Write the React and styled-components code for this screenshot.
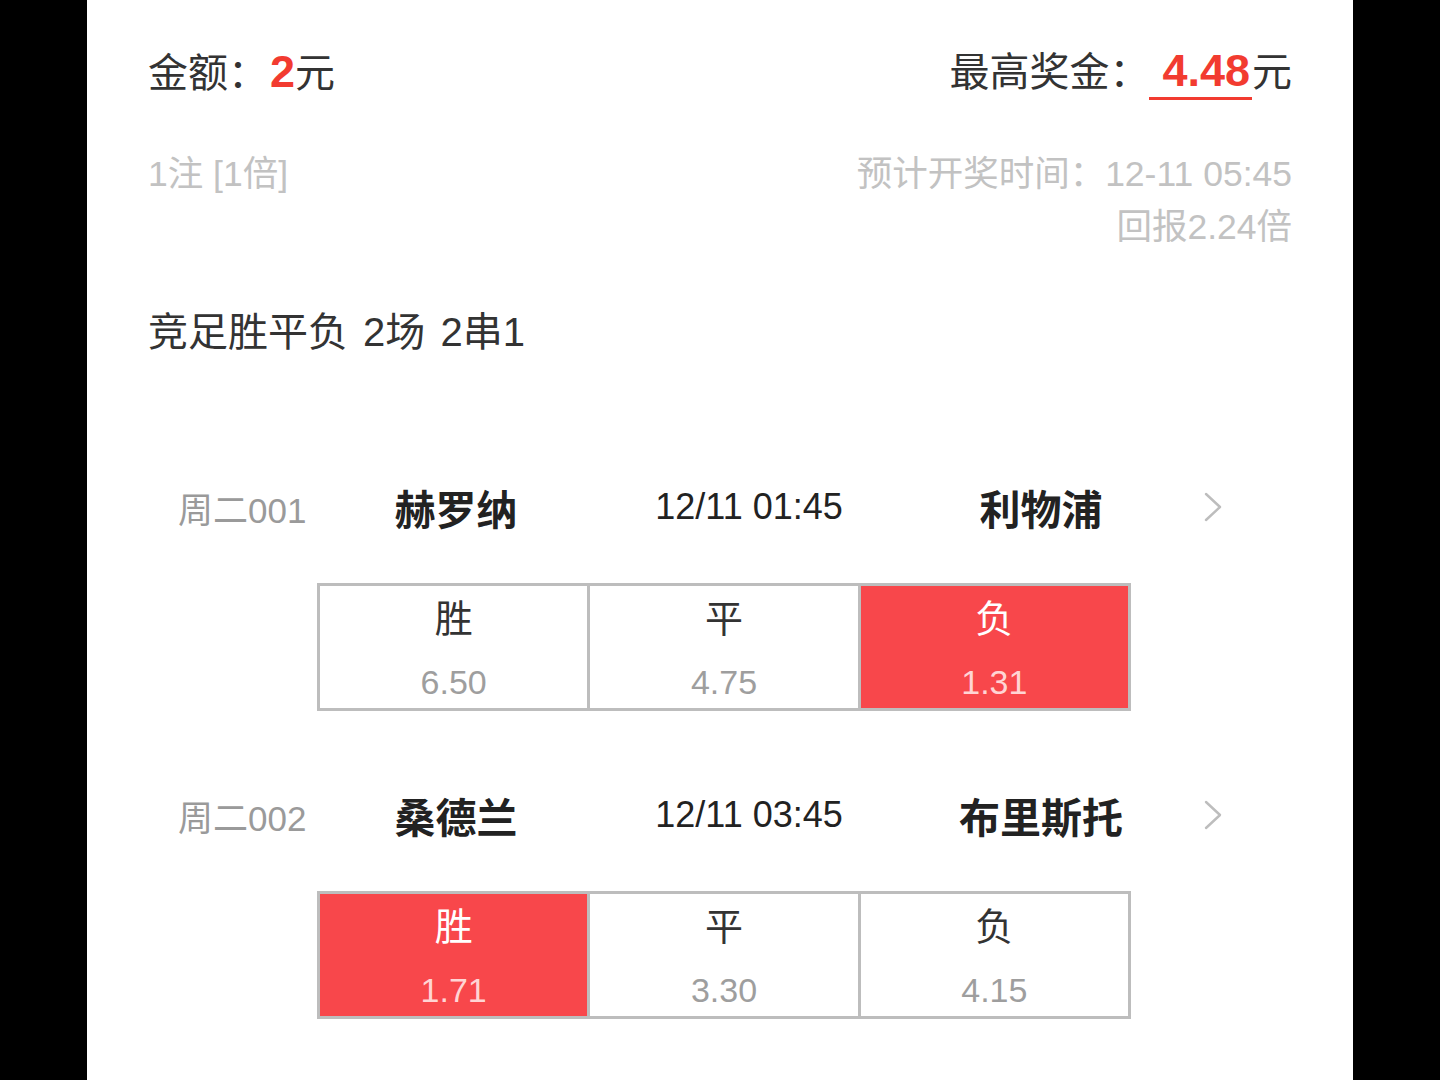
import React from "react";
import styled, { createGlobalStyle } from "styled-components";

const GlobalStyle = createGlobalStyle`
  html, body {
    margin: 0;
    padding: 0;
    background: #000;
  }
  body {
    font-family: "Liberation Sans", "Noto Sans CJK SC", sans-serif;
  }
`;

const Page = styled.div`
  width: 1266px;
  min-height: 1080px;
  margin: 0 auto;
  background: #fff;
  padding: 40px 61px 0;
  box-sizing: border-box;
  color: #333;
`;

const Row = styled.div`
  display: flex;
  justify-content: space-between;
  align-items: flex-start;
  margin-top: ${(p) => p.$mt || 0}px;
`;

const Big = styled.div`
  font-size: 40px;
  line-height: 64px;
  color: #333;
  white-space: nowrap;
`;

const RedNum = styled.span`
  color: #f23b30;
  font-weight: bold;
  font-size: 45px;
  margin-left: 2px;
`;

const Underlined = styled(RedNum)`
  display: inline-block;
  line-height: 52px;
  margin-left: 0;
  padding: 0 2px 0 13px;
  border-bottom: 3px solid #f23b30;
`;

const Muted = styled.div`
  font-size: 35.5px;
  line-height: 53px;
  color: #c2c2c2;
  text-align: ${(p) => p.$align || "left"};
  white-space: nowrap;
`;

const PlayTitle = styled.div`
  margin-top: 48px;
  font-size: 40px;
  line-height: 60px;
  color: #333;
  word-spacing: 4px;
`;

const Match = styled.div`
  margin-top: ${(p) => p.$mt}px;
`;

const MatchHead = styled.div`
  display: grid;
  grid-template-columns: 160px 236px 350px 234px 110px;
  align-items: center;
  padding-left: 30px;
  height: 60px;
`;

const Weekday = styled.div`
  font-size: 35px;
  color: #9a9a9a;
  white-space: nowrap;
`;

const Team = styled.div`
  font-size: 41px;
  font-weight: bold;
  color: #222;
  text-align: center;
  white-space: nowrap;
`;

const Time = styled.div`
  font-size: 36px;
  color: #222;
  text-align: center;
`;

const Chevron = styled.div`
  display: flex;
  justify-content: center;
  align-items: center;
`;

const OddsTable = styled.div`
  margin: 46px 0 0 169px;
  width: 814px;
  box-sizing: border-box;
  display: grid;
  grid-template-columns: repeat(3, 1fr);
  gap: 3px;
  border: 3px solid #bdbdbd;
  background: #bdbdbd;
`;

const Cell = styled.div`
  height: 122px;
  box-sizing: border-box;
  padding-top: 7px;
  display: flex;
  flex-direction: column;
  align-items: center;
  background: ${(p) => (p.$on ? "#f8474b" : "#fff")};
`;

const Label = styled.div`
  font-size: 38px;
  line-height: 52px;
  color: ${(p) => (p.$on ? "#fff" : "#333")};
`;

const Odd = styled.div`
  margin-top: 15px;
  font-size: 34px;
  line-height: 44px;
  color: ${(p) => (p.$on ? "#ffd4d4" : "#9e9e9e")};
`;

const matches = [
  {
    no: "周二001",
    home: "赫罗纳",
    time: "12/11 01:45",
    away: "利物浦",
    odds: ["6.50", "4.75", "1.31"],
    pick: 2,
    mt: 115,
  },
  {
    no: "周二002",
    home: "桑德兰",
    time: "12/11 03:45",
    away: "布里斯托",
    odds: ["1.71", "3.30", "4.15"],
    pick: 0,
    mt: 74,
  },
];

const labels = ["胜", "平", "负"];

export default function App() {
  return (
    <>
      <GlobalStyle />
      <Page>
        <Row>
          <Big>
            金额：<RedNum>2</RedNum>元
          </Big>
          <Big>
            最高奖金：<Underlined>4.48</Underlined>元
          </Big>
        </Row>
        <Row $mt={43}>
          <Muted>1注 [1倍]</Muted>
          <div>
            <Muted $align="right">预计开奖时间：12-11 05:45</Muted>
            <Muted $align="right">回报2.24倍</Muted>
          </div>
        </Row>
        <PlayTitle>竞足胜平负 2场 2串1</PlayTitle>
        {matches.map((m) => (
          <Match key={m.no} $mt={m.mt}>
            <MatchHead>
              <Weekday>{m.no}</Weekday>
              <Team>{m.home}</Team>
              <Time>{m.time}</Time>
              <Team>{m.away}</Team>
              <Chevron>
                <svg width="18" height="30" viewBox="0 0 18 30" fill="none">
                  <polyline
                    points="2,2 16,15 2,28"
                    stroke="#bdbdbd"
                    strokeWidth="2.4"
                    strokeLinecap="round"
                    strokeLinejoin="round"
                  />
                </svg>
              </Chevron>
            </MatchHead>
            <OddsTable>
              {labels.map((l, i) => (
                <Cell key={l} $on={m.pick === i}>
                  <Label $on={m.pick === i}>{l}</Label>
                  <Odd $on={m.pick === i}>{m.odds[i]}</Odd>
                </Cell>
              ))}
            </OddsTable>
          </Match>
        ))}
      </Page>
    </>
  );
}
